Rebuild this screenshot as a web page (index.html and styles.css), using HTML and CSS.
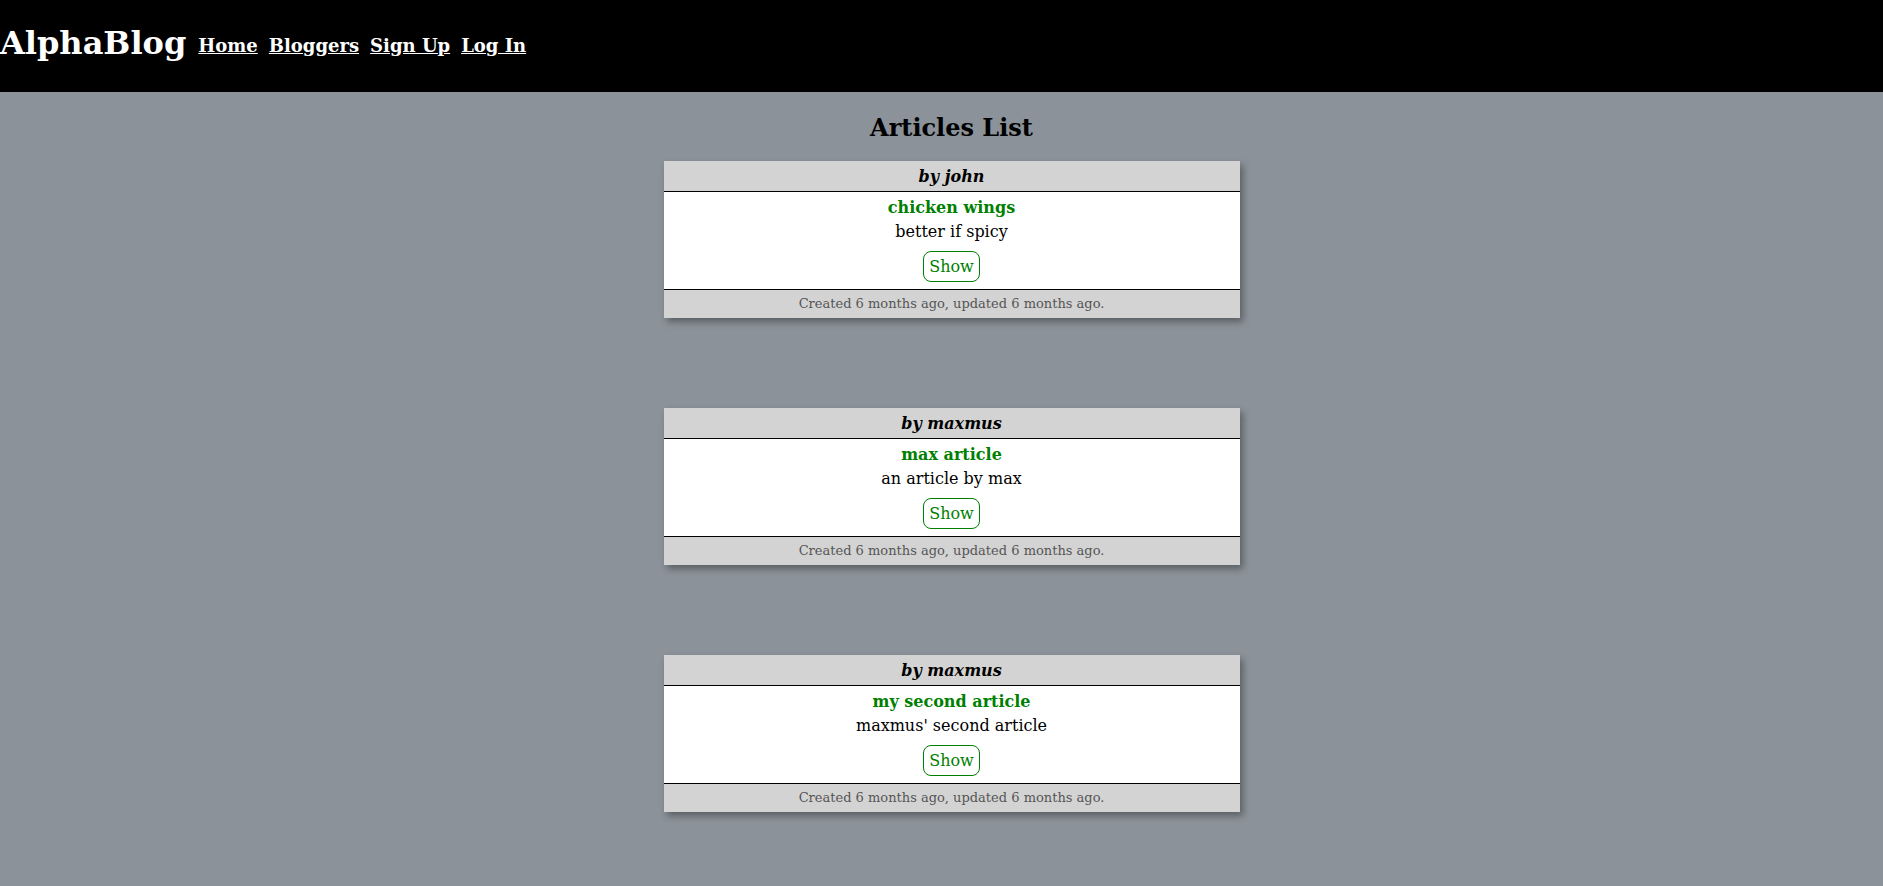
FILE: index.html
```html
<!DOCTYPE html>
<html>
<head>
<meta charset="utf-8">
<title>AlphaBlog</title>
<link rel="stylesheet" href="styles.css">
</head>
<body>
<header class="topbar">
  <span class="brand">AlphaBlog</span>
  <nav class="nav">
    <a href="#">Home</a>
    <a href="#">Bloggers</a>
    <a href="#">Sign Up</a>
    <a href="#">Log In</a>
  </nav>
</header>
<main class="content">
  <h2 class="page-title">Articles List</h2>
  <div class="list">
    <div class="card">
      <div class="card-head">by john</div>
      <div class="card-body">
        <div class="card-title">chicken wings</div>
        <div class="card-desc">better if spicy</div>
        <a class="btn" href="#">Show</a>
      </div>
      <div class="card-foot">Created 6 months ago, updated 6 months ago.</div>
    </div>
    <div class="card">
      <div class="card-head">by maxmus</div>
      <div class="card-body">
        <div class="card-title">max article</div>
        <div class="card-desc">an article by max</div>
        <a class="btn" href="#">Show</a>
      </div>
      <div class="card-foot">Created 6 months ago, updated 6 months ago.</div>
    </div>
    <div class="card">
      <div class="card-head">by maxmus</div>
      <div class="card-body">
        <div class="card-title">my second article</div>
        <div class="card-desc">maxmus' second article</div>
        <a class="btn" href="#">Show</a>
      </div>
      <div class="card-foot">Created 6 months ago, updated 6 months ago.</div>
    </div>
  </div>
</main>
</body>
</html>
```

FILE: styles.css
```css
html, body {
  margin: 0;
  padding: 0;
}
body {
  background: #8b9299;
  font-family: "DejaVu Serif", serif;
  color: #000;
  min-height: 100vh;
}
.topbar {
  background: #000;
  height: 92px;
  display: flex;
  align-items: flex-start;
  padding-top: 21px;
  box-sizing: border-box;
  gap: 12px;
}
.brand {
  color: #fff;
  font-weight: bold;
  font-size: 32px;
  line-height: 44px;
}
.nav {
  display: flex;
  gap: 11px;
  padding-top: 12px;
}
.nav a {
  color: #fff;
  font-weight: bold;
  font-size: 18px;
  line-height: 26px;
  text-decoration: underline;
}
.content {
  display: flex;
  flex-direction: column;
  align-items: center;
  padding-left: 20px;
}
.page-title {
  margin: 20px 0 0;
  font-size: 24px;
  line-height: 32px;
  font-weight: bold;
}
.list {
  margin-top: 17px;
  display: flex;
  flex-direction: column;
  gap: 90px;
  padding-bottom: 60px;
}
.card {
  width: 576px;
  box-shadow: 3px 4px 7px rgba(0, 0, 0, 0.35);
  text-align: center;
}
.card-head {
  background: #d3d3d3;
  height: 30px;
  line-height: 31px;
  font-weight: bold;
  font-style: italic;
  font-size: 16px;
  border-bottom: 1px solid #000;
}
.card-body {
  background: #fff;
  padding: 4px 0 7px;
  display: flex;
  flex-direction: column;
  align-items: center;
}
.card-title {
  color: #008000;
  font-weight: bold;
  font-size: 16px;
  line-height: 24px;
}
.card-desc {
  font-size: 16px;
  line-height: 24px;
}
.btn {
  margin-top: 7px;
  border: 1px solid #008000;
  border-radius: 8px;
  color: #008000;
  text-decoration: none;
  font-size: 16px;
  line-height: 29px;
  padding: 0 5px;
}
.card-foot {
  background: #d3d3d3;
  border-top: 1px solid #000;
  height: 28px;
  line-height: 28px;
  font-size: 13px;
  color: #555;
}
```
